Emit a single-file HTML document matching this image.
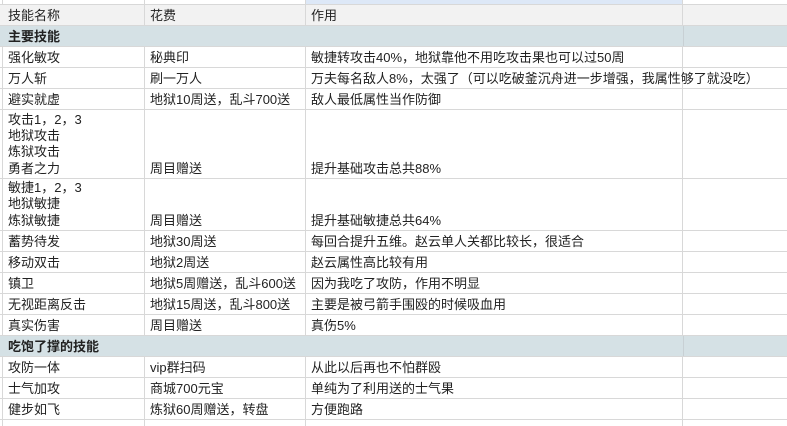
<!DOCTYPE html>
<html><head><meta charset="utf-8"><style>
body{margin:0;width:787px;height:426px;overflow:hidden;background:#fff;font-family:"Liberation Sans","Noto Sans CJK SC",sans-serif;font-size:13px;color:#222;position:relative}
.r{position:absolute;left:0;width:787px;border-bottom:1px solid #d8d8d8;box-sizing:border-box}
.c{position:absolute;top:0;bottom:0;border-right:1px solid #d8d8d8;box-sizing:border-box;padding:0 0 1px 5px;display:flex;align-items:flex-end;line-height:16.3px;white-space:nowrap}
.a{left:3px;width:142px}.b{left:145px;width:161px}.d{left:306px;width:377px}.e{left:683px;width:104px;border-right:none}
.h{background:#f2f2f2}.s{background:#d5e1e5;font-weight:bold}
</style></head><body>
<div style="position:absolute;left:0;top:0;width:3px;height:426px;border-right:1px solid #d8d8d8;box-sizing:border-box"></div>
<div class="r" style="top:0;height:5px"><div class="c a"></div><div class="c b"></div><div class="c d" style="background:#dde8f7"></div><div class="c e"></div></div>
<div class="r h" style="top:5px;height:21px"><div class="c a">技能名称</div><div class="c b">花费</div><div class="c d">作用</div><div class="c e"></div></div>
<div class="r s" style="top:26px;height:21px"><div class="c a" style="border-right:none">主要技能</div><div class="c e" style="border-left:1px solid #c8d0d4"></div></div>
<div class="r" style="top:47px;height:21px"><div class="c a">强化敏攻</div><div class="c b">秘典印</div><div class="c d">敏捷转攻击40%，地狱靠他不用吃攻击果也可以过50周</div><div class="c e"></div></div>
<div class="r" style="top:68px;height:21px"><div class="c a">万人斩</div><div class="c b">刷一万人</div><div class="c d">万夫每名敌人8%，太强了（可以吃破釜沉舟进一步增强，我属性够了就没吃）</div><div class="c e"></div></div>
<div class="r" style="top:89px;height:21px"><div class="c a">避实就虚</div><div class="c b">地狱10周送，乱斗700送</div><div class="c d">敌人最低属性当作防御</div><div class="c e"></div></div>
<div class="r" style="top:110px;height:69px"><div class="c a">攻击1，2，3<br>地狱攻击<br>炼狱攻击<br>勇者之力</div><div class="c b">周目赠送</div><div class="c d">提升基础攻击总共88%</div><div class="c e"></div></div>
<div class="r" style="top:179px;height:52px"><div class="c a">敏捷1，2，3<br>地狱敏捷<br>炼狱敏捷</div><div class="c b">周目赠送</div><div class="c d">提升基础敏捷总共64%</div><div class="c e"></div></div>
<div class="r" style="top:231px;height:21px"><div class="c a">蓄势待发</div><div class="c b">地狱30周送</div><div class="c d">每回合提升五维。赵云单人关都比较长，很适合</div><div class="c e"></div></div>
<div class="r" style="top:252px;height:21px"><div class="c a">移动双击</div><div class="c b">地狱2周送</div><div class="c d">赵云属性高比较有用</div><div class="c e"></div></div>
<div class="r" style="top:273px;height:21px"><div class="c a">镇卫</div><div class="c b">地狱5周赠送，乱斗600送</div><div class="c d">因为我吃了攻防，作用不明显</div><div class="c e"></div></div>
<div class="r" style="top:294px;height:21px"><div class="c a">无视距离反击</div><div class="c b">地狱15周送，乱斗800送</div><div class="c d">主要是被弓箭手围殴的时候吸血用</div><div class="c e"></div></div>
<div class="r" style="top:315px;height:21px"><div class="c a">真实伤害</div><div class="c b">周目赠送</div><div class="c d">真伤5%</div><div class="c e"></div></div>
<div class="r s" style="top:336px;height:21px"><div class="c a" style="border-right:none">吃饱了撑的技能</div><div class="c e" style="border-left:1px solid #c8d0d4"></div></div>
<div class="r" style="top:357px;height:21px"><div class="c a">攻防一体</div><div class="c b">vip群扫码</div><div class="c d">从此以后再也不怕群殴</div><div class="c e"></div></div>
<div class="r" style="top:378px;height:21px"><div class="c a">士气加攻</div><div class="c b">商城700元宝</div><div class="c d">单纯为了利用送的士气果</div><div class="c e"></div></div>
<div class="r" style="top:399px;height:21px"><div class="c a">健步如飞</div><div class="c b">炼狱60周赠送，转盘</div><div class="c d">方便跑路</div><div class="c e"></div></div>
<div class="r" style="top:420px;height:6px;border-bottom:none"><div class="c a"></div><div class="c b"></div><div class="c d"></div><div class="c e"></div></div>
</body></html>
